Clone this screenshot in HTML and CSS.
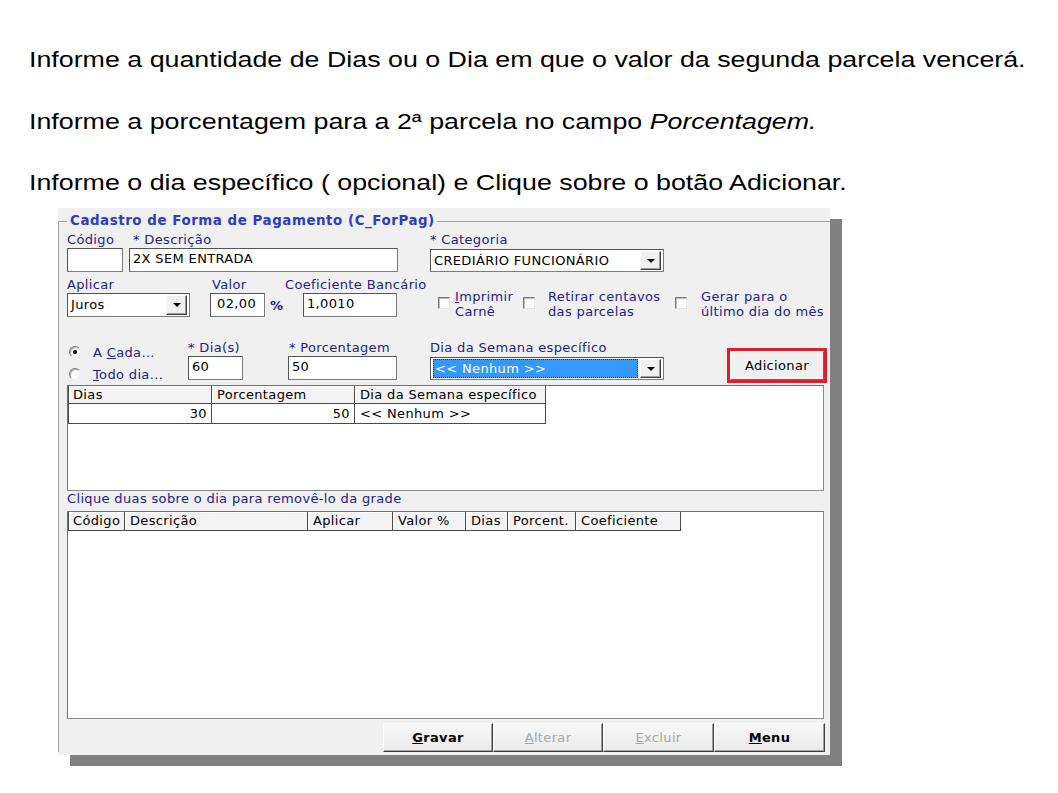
FILE: index.html
```html
<!DOCTYPE html>
<html lang="pt-BR">
<head>
<meta charset="utf-8">
<title>Cadastro de Forma de Pagamento</title>
<link rel="stylesheet" href="styles.css">
</head>
<body>
<div class="instr">
  <p>Informe a quantidade de Dias ou o Dia em que o valor da segunda parcela vencerá.</p>
  <p>Informe a porcentagem para a 2ª parcela no campo <em>Porcentagem.</em></p>
  <p>Informe o dia específico ( opcional) e Clique sobre o botão Adicionar.</p>
</div>

<div class="window">
  <fieldset class="group">
    <legend>Cadastro de Forma de Pagamento (C_ForPag)</legend>

    <div class="row row1">
      <div class="fld f-cod"><span class="lbl">Código</span><div class="inp"></div></div>
      <div class="fld f-desc"><span class="lbl ind">* Descrição</span><div class="inp">2X SEM ENTRADA</div></div>
      <div class="fld f-cat"><span class="lbl">* Categoria</span>
        <div class="sel"><span class="sel-text">CREDIÁRIO FUNCIONÁRIO</span><span class="drop"></span></div>
      </div>
    </div>

    <div class="row row2">
      <div class="fld f-apl"><span class="lbl">Aplicar</span>
        <div class="sel sel-tall"><span class="sel-text">Juros</span><span class="drop"></span></div>
      </div>
      <div class="fld f-val"><span class="lbl ind2">Valor</span><div class="inp right">02,00</div></div>
      <span class="pct">%</span>
      <div class="fld f-coef"><span class="lbl">Coeficiente Bancário</span><div class="inp coef">1,0010</div></div>
      <div class="checks">
        <div class="chk c1"><span class="box"></span><span class="chk-lbl"><u>I</u>mprimir<br>Carnê</span></div>
        <div class="chk c2"><span class="box"></span><span class="chk-lbl">Retirar centavos<br>das parcelas</span></div>
        <div class="chk c3"><span class="box"></span><span class="chk-lbl">Gerar para o<br>último dia do mês</span></div>
      </div>
    </div>

    <div class="row row3">
      <div class="radios">
        <div class="radio-item"><span class="radio on"></span><span class="rlbl">A <u>C</u>ada...</span></div>
        <div class="radio-item"><span class="radio"></span><span class="rlbl"><u>T</u>odo dia...</span></div>
      </div>
      <div class="fld f-dia"><span class="lbl">* Dia(s)</span><div class="inp">60</div></div>
      <div class="fld f-porc"><span class="lbl ind1">* Porcentagem</span><div class="inp">50</div></div>
      <div class="fld f-sem"><span class="lbl">Dia da Semana específico</span>
        <div class="sel focus"><span class="sel-text">&lt;&lt; Nenhum &gt;&gt;</span><span class="drop"></span></div>
      </div>
      <div class="hl"><div class="btn-add">Adicionar</div></div>
    </div>

    <div class="grid g1">
      <div class="grow ghead cols1">
        <div class="gc first">Dias</div>
        <div class="gc">Porcentagem</div>
        <div class="gc">Dia da Semana específico</div>
      </div>
      <div class="grow gdata cols1">
        <div class="gc first num">30</div>
        <div class="gc num">50</div>
        <div class="gc txt">&lt;&lt; Nenhum &gt;&gt;</div>
      </div>
    </div>

    <div class="caption">Clique duas sobre o dia para removê-lo da grade</div>

    <div class="grid g2">
      <div class="grow ghead cols2">
        <div class="gc first">Código</div>
        <div class="gc">Descrição</div>
        <div class="gc">Aplicar</div>
        <div class="gc">Valor %</div>
        <div class="gc">Dias</div>
        <div class="gc">Porcent.</div>
        <div class="gc">Coeficiente</div>
      </div>
    </div>

    <div class="btns">
      <div class="btn b1 bold"><span><u>G</u>ravar</span></div>
      <div class="btn b2 dis"><span><u>A</u>lterar</span></div>
      <div class="btn b3 dis"><span><u>E</u>xcluir</span></div>
      <div class="btn b4 bold"><span><u>M</u>enu</span></div>
    </div>
  </fieldset>
</div>
</body>
</html>
```

FILE: styles.css
```css
* { box-sizing: border-box; }
html, body { margin: 0; padding: 0; background: #fff; }
body {
  width: 1058px;
  height: 793px;
  overflow: hidden;
  font-family: "DejaVu Sans", "Liberation Sans", sans-serif;
}

/* instructions */
.instr { height: 208px; padding: 47px 0 0 29px; }
.instr p {
  width: max-content;
  margin: 0 0 35.5px;
  font-family: "Liberation Sans", Arial, sans-serif;
  font-size: 22px;
  line-height: 26px;
  color: #000;
  white-space: nowrap;
  transform: scaleX(1.218);
  transform-origin: 0 50%;
}

/* window */
.window {
  margin-left: 58px;
  width: 772px;
  height: 547px;
  padding-top: 5px;
  background: #f0f0f0;
  box-shadow: 12px 11px 0 #808080;
  font-size: 13px;
  letter-spacing: 0.35px;
  color: #000;
}
.group {
  margin: 0;
  min-width: 0;
  padding: 3px 3px 0 8px;
  border: 0;
  border-top: 1px solid #a0a0a0;
  border-left: 1px solid #a0a0a0;
}
.group legend {
  padding: 0 2px 0 3px;
  font-weight: bold;
  font-size: 13.4px;
  line-height: 16px;
  letter-spacing: 0.55px;
  color: #2a3cc8;
}

.row { display: flex; align-items: flex-start; }
.row2 { margin-top: 5px; }
.row3 { margin-top: 21px; height: 45px; }

.fld { display: flex; flex-direction: column; }
.lbl {
  display: block;
  height: 16px;
  line-height: 16px;
  color: #22228c;
  white-space: nowrap;
}
.ind { padding-left: 4px; }
.ind1 { padding-left: 1px; }
.ind2 { padding-left: 2px; }

.inp {
  height: 24px;
  background: #fff;
  border: 1px solid #7c7c7c;
  border-top-color: #555;
  border-left-color: #555;
  line-height: 20px;
  padding: 0 3px;
  white-space: nowrap;
}
.inp.right { text-align: right; padding-right: 8px; }
.inp.coef { margin-left: 18px; }

.sel {
  display: flex;
  height: 23px;
  margin-top: 1px;
  padding: 1px 2px 1px 1px;
  background: #fff;
  border: 1px solid #7c7c7c;
  border-top-color: #555;
  border-left-color: #555;
}
.sel-tall { height: 24px; margin-top: 0; }
.sel-text {
  flex: 1;
  line-height: 19px;
  padding-left: 2px;
  white-space: nowrap;
  overflow: hidden;
}
.drop {
  width: 21px;
  margin-left: 2px;
  background: #f0f0f0;
  border: 1px solid;
  border-color: #fafafa #404040 #404040 #fafafa;
  box-shadow: inset -1px -1px 0 #a0a0a0;
  display: flex;
  align-items: center;
  justify-content: center;
}
.drop::after {
  content: "";
  border-left: 4px solid transparent;
  border-right: 4px solid transparent;
  border-top: 4px solid #000;
}
.sel.focus .sel-text {
  background: #3399ff;
  color: #fff;
  outline: 1px dotted #10307a;
  outline-offset: -1px;
  margin: 0 0 0 1px;
}

.f-cod { width: 56px; }
.f-desc { width: 269px; margin-left: 6px; }
.f-cat { width: 234px; margin-left: 32px; }

.f-apl { width: 123px; }
.f-val { width: 55px; margin-left: 20px; }
.pct {
  width: 20px;
  padding: 21px 0 0 5px;
  line-height: 16px;
  color: #22228c;
  font-weight: bold;
}
.f-coef { width: 112px; }

.checks { display: flex; margin-left: 33px; margin-top: 12px; }
.chk { display: flex; align-items: flex-start; }
.c1 { width: 93px; padding-left: 8px; }
.c2 { width: 152px; }
.c3 { width: 140px; }
.box {
  flex: none;
  width: 12px;
  height: 12px;
  margin-top: 8px;
  background: #fff;
  border: 1px solid;
  border-color: #7a7a7a #e4e4e4 #e4e4e4 #7a7a7a;
  box-shadow: inset 1px 1px 0 #b8b8b8;
}
.chk-lbl {
  line-height: 15px;
  color: #22228c;
  white-space: nowrap;
}
.c1 .chk-lbl { margin-left: 5px; }
.c2 .chk-lbl { margin-left: 13px; }
.c3 .chk-lbl { margin-left: 14px; }

.radios { width: 121px; margin-top: 1px; display: flex; flex-direction: column; }
.radio-item { height: 22px; display: flex; align-items: center; }
.radio {
  position: relative;
  flex: none;
  width: 12px;
  height: 12px;
  margin: 0 12px 0 2px;
  border-radius: 50%;
  background: #fff;
  border: 1px solid;
  border-color: #7a7a7a #ececec #ececec #7a7a7a;
  box-shadow: inset 1px 1px 0 #b0b0b0;
}
.radio.on::after {
  content: "";
  position: absolute;
  left: 3px;
  top: 3px;
  width: 4px;
  height: 4px;
  border-radius: 50%;
  background: #000;
}
.rlbl { color: #22228c; white-space: nowrap; }

.f-dia { width: 55px; }
.f-porc { width: 109px; margin-left: 45px; }
.f-sem { width: 234px; margin-left: 33px; }

.hl {
  width: 100px;
  height: 35px;
  margin: 8px 0 0 63px;
  border: 3px solid #e31c2b;
}
.btn-add {
  height: 100%;
  display: flex;
  align-items: center;
  justify-content: center;
  background: #f0f0f0;
  border: 1px solid;
  border-color: #fafafa #6a6a6a #6a6a6a #fafafa;
}

/* grids */
.grid {
  width: 757px;
  background: #fff;
  border: 1px solid #8a8a8a;
  border-top-color: #707070;
  border-left-color: #707070;
}
.g1 { height: 106px; }
.g2 { height: 208px; }
.grow { display: grid; }
.cols1 { grid-template-columns: 144px 143px 191px; }
.cols2 { grid-template-columns: 57px 183px 85px 73px 42px 68px 105px; }
.gc {
  border-right: 1px solid #4a4a4a;
  border-bottom: 1px solid #4a4a4a;
  padding: 0 0 0 4px;
  white-space: nowrap;
  overflow: hidden;
}
.gc.first { border-left: 1px solid #4a4a4a; }
.ghead .gc {
  height: 18px;
  line-height: 17px;
  background: #f3f3f3;
  box-shadow: inset 1px 1px 0 #fff;
}
.g2 .ghead .gc { height: 19px; line-height: 18px; }
.ghead .gc + .gc { padding-left: 5px; }
.gdata .gc { height: 20px; line-height: 19px; }
.gdata .num { text-align: right; padding: 0 4px 0 0; }
.gdata .txt { padding-left: 5px; }

.caption {
  height: 20px;
  line-height: 16px;
  color: #22228c;
  white-space: nowrap;
}

/* bottom buttons */
.btns {
  display: flex;
  justify-content: flex-end;
  margin: 4px 2px 0 0;
}
.btn {
  height: 29px;
  display: flex;
  align-items: center;
  justify-content: center;
  background: linear-gradient(#f7f7f7, #ebebeb);
  border: 1px solid;
  border-color: #ffffff #404040 #404040 #ffffff;
  box-shadow: inset -1px -1px 0 #a0a0a0;
}
.b1, .b2 { width: 110px; }
.b3, .b4 { width: 111px; }
.bold { font-weight: bold; color: #000; }
.dis { color: #a8a8a8; }
```
